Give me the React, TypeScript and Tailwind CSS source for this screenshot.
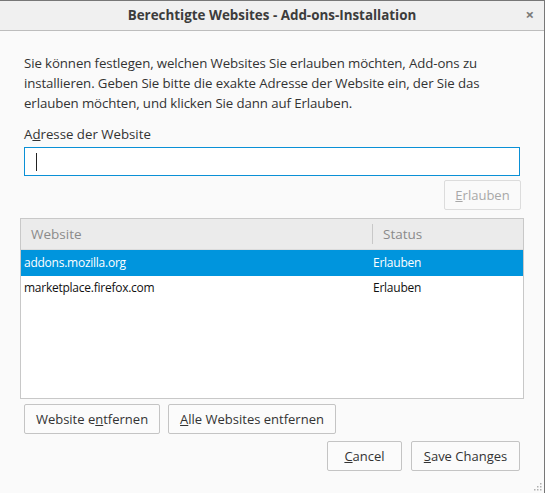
import React from "react";

const font = { fontFamily: '"Open Sans", "Noto Sans", sans-serif' };

function Btn({
  children,
  className = "",
  disabled = false,
}: {
  children: React.ReactNode;
  className?: string;
  disabled?: boolean;
}) {
  return (
    <button
      disabled={disabled}
      className={
        "h-[30px] rounded-[2px] border text-[13px] leading-none " +
        (disabled
          ? "border-[#dcdcdc] bg-[#fafafa] text-[#a8a8a8]"
          : "border-[#c4c4c4] bg-[#fbfbfb] text-[#333]") +
        " " +
        className
      }
    >
      {children}
    </button>
  );
}

export default function App() {
  return (
    <div
      className="relative flex h-[493px] w-[545px] flex-col border-t border-r border-[#777] bg-[#fafafa] text-[#333]"
      style={font}
    >
      {/* Title bar */}
      <div className="relative flex h-[30px] shrink-0 items-center justify-center border-b border-[#bdbdbd] bg-[#f0f0f0]">
        <span className="text-[13.4px] font-bold text-[#3c3c3c]">
          Berechtigte Websites - Add-ons-Installation
        </span>
        <span className="absolute right-[10px] top-[6px] text-[15px] font-bold leading-none text-[#7a7a7a]">
          ×
        </span>
      </div>

      <div className="flex flex-1 flex-col px-6 pt-[22px]">
        <p className="text-[13.25px] leading-[20px] tracking-[-0.1px]">
          Sie können festlegen, welchen Websites Sie erlauben möchten, Add-ons zu
          <br />
          installieren. Geben Sie bitte die exakte Adresse der Website ein, der Sie das
          <br />
          erlauben möchten, und klicken Sie dann auf Erlauben.
        </p>

        <label className="mt-[11px] text-[13.25px] leading-[20px]">
          A<span className="underline">d</span>resse der Website
        </label>
        <div className="mt-[3px] flex h-[29px] items-center border border-[#0a90d6] bg-white pl-[11px]">
          <div className="h-[18px] w-px bg-[#222]" />
        </div>

        <div className="mt-[4px] flex justify-end">
          <Btn disabled className="w-[77px] -mr-px">
            <span className="underline">E</span>rlauben
          </Btn>
        </div>

        {/* Table */}
        <div className="mx-[-4px] mt-[8px] flex h-[181px] flex-col border border-[#c8c8c8] bg-white">
          <div className="flex h-[31px] shrink-0 items-center border-b border-[#dcdcdc] bg-[#ebebeb] text-[13.5px] text-[#8a8a8a]">
            <div className="flex h-full w-[351px] items-center pl-[10px]">Website</div>
            <div className="h-[20px] w-px bg-[#c8c8c8]" />
            <div className="pl-[10px]">Status</div>
          </div>
          <div className="flex h-[26px] items-center bg-[#0095dd] text-[12px] tracking-[-0.25px] text-white">
            <div className="w-[352px] pl-[3px]">addons.mozilla.org</div>
            <div>Erlauben</div>
          </div>
          <div className="flex h-[24px] items-center text-[12px] tracking-[-0.25px] text-[#111]">
            <div className="w-[352px] pl-[3px]">marketplace.firefox.com</div>
            <div>Erlauben</div>
          </div>
        </div>

        <div className="mt-[5px] flex gap-[8px]">
          <Btn className="w-[136px]">
            Website e<span className="underline">n</span>tfernen
          </Btn>
          <Btn className="w-[168px]">
            <span className="underline">A</span>lle Websites entfernen
          </Btn>
        </div>

        <div className="mt-[7px] flex justify-end gap-[9px]">
          <Btn className="w-[75px]">
            <span className="underline">C</span>ancel
          </Btn>
          <Btn className="w-[109px]">
            <span className="underline">S</span>ave Changes
          </Btn>
        </div>
      </div>

      {/* resize grip */}
      <svg className="absolute bottom-[2px] right-[2px]" width="10" height="10" viewBox="0 0 10 10">
        {[
          [8, 2],
          [8, 5],
          [5, 5],
          [8, 8],
          [5, 8],
          [2, 8],
        ].map(([x, y], i) => (
          <rect key={i} x={x} y={y} width="1.5" height="1.5" fill="#b0b0b0" />
        ))}
      </svg>
    </div>
  );
}
